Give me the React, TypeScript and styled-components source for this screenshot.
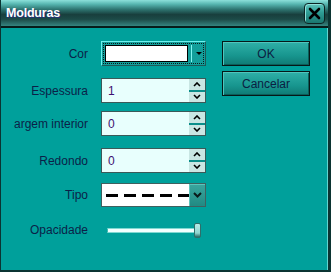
import React from 'react';
import styled, { createGlobalStyle } from 'styled-components';

const Global = createGlobalStyle`
  html, body { margin: 0; padding: 0; background: #009f9a; }
  body { font-family: "Liberation Sans", Arial, sans-serif; }
`;

const Window = styled.div`width:331px;height:272px;box-sizing:border-box;display:flex;flex-direction:column;background:#00a09b;border-left:1px solid #0b3432;border-right:3px solid #0b3432;border-bottom:2px solid #0b3432;box-shadow:inset -1px 0 0 #5fd6d0;overflow:hidden;`;
const TitleBar = styled.div`height:26px;flex:none;display:flex;align-items:center;justify-content:space-between;padding:0 3px 0 5px;border-bottom:2px solid #071c1b;background:linear-gradient(180deg,#8ce0da 0%,#56b6b0 16%,#2e7571 36%,#183f3d 56%,#1c4a47 74%,#358480 100%);`;
const Title = styled.span`color:#fff;font-weight:700;font-size:12.5px;text-shadow:1px 1px 0 #24307a;letter-spacing:-0.2px;`;
const CloseBtn = styled.div`width:19px;height:19px;border:1.5px solid #0b2423;border-radius:4px;display:flex;align-items:center;justify-content:center;background:linear-gradient(180deg,#5fc4bc 0%,#2e9d95 45%,#1a7770 100%);box-shadow:inset 1px 1px 0 #8ee0da;`;
const Body = styled.div`flex:1;display:flex;padding:13px 0 0 13px;gap:16px;`;
const Form = styled.div`display:grid;grid-template-columns:74px 105px;grid-template-rows:37px 33px 37px 35px 37px 24px;column-gap:13px;align-items:start;`;
const Label = styled.div<{ $h?: number }>`height:${p => p.$h ?? 25}px;display:flex;align-items:center;justify-content:flex-end;overflow:hidden;white-space:nowrap;color:#0b1f48;font-size:12px;`;
const Spin = styled.div`height:25px;box-sizing:border-box;display:flex;border:1px solid #3b5958;background:#e8fffd;`;
const SpinValue = styled.div`flex:1;padding-left:6px;display:flex;align-items:center;color:#3e0f70;font-size:12px;`;
const SpinBtns = styled.div`width:16px;display:flex;flex-direction:column;background:#c9e6e3;`;
const SpinBtn = styled.div<{ $down?: boolean }>`flex:1;display:flex;align-items:center;justify-content:center;${p => p.$down ? 'border-top:2px solid #0a8e8a;' : ''}`;
const ColorCombo = styled.div`height:25px;box-sizing:border-box;border:1px solid #6ef0ee;border-right-color:#1d5a58;border-bottom-color:#1d5a58;padding:1px;background:#129e9a;`;
const Dotted = styled.div`height:100%;box-sizing:border-box;border:1px dotted #0a1a1a;display:flex;align-items:stretch;padding:1px;gap:3px;`;
const Swatch = styled.div`flex:1;background:#fff;border:1px solid #000;`;
const ComboSide = styled.div`width:10px;display:flex;align-items:center;justify-content:flex-end;border-left:1px solid #80f4f0;`;
const TypeCombo = styled.div`height:24px;box-sizing:border-box;display:flex;border:1px solid #40605f;background:#fff;`;
const DashField = styled.div`flex:1;display:flex;align-items:center;padding-left:4px;overflow:hidden;`;
const Dash = styled.div`width:100%;height:3px;background:repeating-linear-gradient(90deg,#000 0 12px,transparent 12px 18px);`;
const DropBtn = styled.div`width:16px;display:flex;align-items:center;justify-content:center;background:linear-gradient(180deg,#3aa69e 0%,#218a83 100%);box-shadow:inset 1px 1px 0 #5cc4bc;`;
const Slider = styled.div`height:20px;display:flex;align-items:center;padding-left:6px;`;
const Track = styled.div`width:88px;height:3px;background:#f2fffe;border:1px solid #7fd8d2;border-left-color:#3fb8b0;`;
const Thumb = styled.div`width:7px;height:15px;box-sizing:border-box;border-radius:2px;background:linear-gradient(180deg,#b8ece8 0%,#8fd6d0 70%,#2a6a66 100%);border:1px solid #2f6e6a;margin-left:-3px;`;
const Buttons = styled.div`display:flex;flex-direction:column;gap:5px;`;
const Button = styled.div`width:88px;height:25px;box-sizing:border-box;border:1px solid #061818;display:flex;align-items:center;justify-content:center;color:#0b2042;font-size:12px;background:linear-gradient(180deg,#2fb0a8 0%,#17958e 60%,#0f7a74 100%);box-shadow:inset 1px 1px 0 #4ec6be,inset -1px -1px 0 #0a5e59;`;

const Up = () => (
  <svg width="8" height="5" viewBox="0 0 8 5"><path d="M1 4 L4 1 L7 4" stroke="#000" strokeWidth="1.6" fill="none" /></svg>
);
const Down = () => (
  <svg width="8" height="5" viewBox="0 0 8 5"><path d="M1 1 L4 4 L7 1" stroke="#000" strokeWidth="1.6" fill="none" /></svg>
);

const SpinField: React.FC<{ value: string }> = ({ value }) => (
  <Spin>
    <SpinValue>{value}</SpinValue>
    <SpinBtns>
      <SpinBtn><Up /></SpinBtn>
      <SpinBtn $down><Down /></SpinBtn>
    </SpinBtns>
  </Spin>
);

export default function App() {
  return (
    <>
      <Global />
      <Window>
        <TitleBar>
          <Title>Molduras</Title>
          <CloseBtn>
            <svg width="13" height="13" viewBox="0 0 13 13">
              <path d="M2 2 L11 11 M11 2 L2 11" stroke="#000" strokeWidth="2.6" strokeLinecap="round" />
            </svg>
          </CloseBtn>
        </TitleBar>
        <Body>
          <Form>
            <Label>Cor</Label>
            <ColorCombo>
              <Dotted>
                <Swatch />
                <ComboSide>
                  <svg width="6" height="4" viewBox="0 0 6 4"><path d="M0 0 H6 L3 3 Z" fill="#000" /></svg>
                </ComboSide>
              </Dotted>
            </ColorCombo>
            <Label>Espessura</Label>
            <SpinField value="1" />
            <Label>margem interior</Label>
            <SpinField value="0" />
            <Label>Redondo</Label>
            <SpinField value="0" />
            <Label $h={24}>Tipo</Label>
            <TypeCombo>
              <DashField><Dash /></DashField>
              <DropBtn>
                <svg width="9" height="6" viewBox="0 0 9 6"><path d="M1 1 L4.5 4.5 L8 1" stroke="#0a1a1a" strokeWidth="2" fill="none" /></svg>
              </DropBtn>
            </TypeCombo>
            <Label $h={20}>Opacidade</Label>
            <Slider>
              <Track />
              <Thumb />
            </Slider>
          </Form>
          <Buttons>
            <Button>OK</Button>
            <Button>Cancelar</Button>
          </Buttons>
        </Body>
      </Window>
    </>
  );
}
